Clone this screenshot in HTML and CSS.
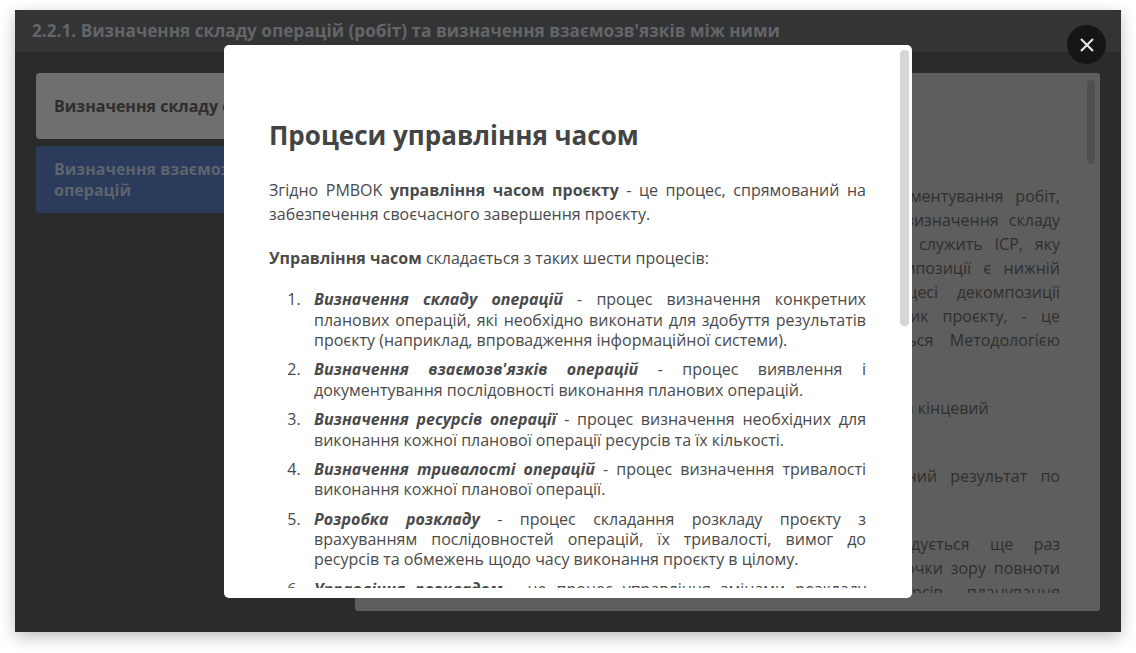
FILE: index.html
```html
<!DOCTYPE html>
<html lang="uk">
<head>
    <meta charset="UTF-8">
    <meta name="viewport" content="width=device-width, initial-scale=1.0">
    <title>Процеси управління часом</title>
    <link rel="stylesheet" href="styles.css">
</head>
<body>
    <div class="window">
        <div class="window-title">2.2.1. Визначення складу операцій (робіт) та визначення взаємозв'язків між ними</div>
        <div class="window-body">
            <div class="side">
                <div class="side-card side-card-grey">Визначення складу операцій</div>
                <div class="side-card side-card-blue">Визначення взаємозв'язків операцій</div>
            </div>
            <div class="panel">
                <div class="panel-text">
                    <span class="line">Першим кроком планування проєкту є визначення та документування робіт,</span>
                    <span class="line">які потрібно виконати для досягнення цілей. Основою для визначення складу</span>
                    <span class="line">операцій проєкту, тобто вхідною інформацією для процесу, служить ІСР, яку</span>
                    <span class="line">розроблено на попередньому етапі. Останнім рівнем декомпозиції є нижній</span>
                    <span class="line">рівень ІСР - пакети робіт, що беруть участь у процесі декомпозиції</span>
                    <span class="line">на операції. Виконує цю роботу команда, зокрема керівник проєкту, - це</span>
                    <span class="line">повністю обов'язкова вимога, яка в цілому рекомендується Методологією</span>
                    <p class="panel-gap">Кожна операція повинна мати визначений початок, тривалість та кінцевий</p>
                    <p class="panel-gap"><span class="line">результат, тобто для кожної операції слід вказати очікуваний результат по</span></p>
                    <p class="panel-gap">
                        <span class="line">Після завершення роботи над переліком дій рекомендується ще раз</span>
                        <span class="line">уважно переглянути отриманий перелік робіт та операцій з точки зору повноти</span>
                        <span class="line">охоплення всіх робочих пакетів та використаних ресурсів, планування</span>
                    </p>
                </div>
                <div class="panel-thumb"></div>
            </div>
        </div>

        <button class="close-btn" aria-label="Закрити">
            <svg width="16" height="16" viewBox="0 0 16 16">
                <path d="M2 2 L14 14 M14 2 L2 14" stroke="#e4e4e4" stroke-width="2.2" fill="none"/>
            </svg>
        </button>

        <div class="modal">
            <div class="modal-body">
                <h2>Процеси управління часом</h2>
                <p>Згідно PMBOK <strong>управління часом проєкту</strong> - це процес, спрямований на забезпечення своєчасного завершення проєкту.</p>
                <p><strong>Управління часом</strong> складається з таких шести процесів:</p>
                <ol>
                    <li><strong><em>Визначення складу операцій</em></strong> - процес визначення конкретних планових операцій, які необхідно виконати для здобуття результатів проєкту (наприклад, впровадження інформаційної системи).</li>
                    <li><strong><em>Визначення взаємозв'язків операцій</em></strong> - процес виявлення і документування послідовності виконання планових операцій.</li>
                    <li><strong><em>Визначення ресурсів операції</em></strong> - процес визначення необхідних для виконання кожної планової операції ресурсів та їх кількості.</li>
                    <li><strong><em>Визначення тривалості операцій</em></strong> - процес визначення тривалості виконання кожної планової операції.</li>
                    <li><strong><em>Розробка розкладу</em></strong> - процес складання розкладу проєкту з врахуванням послідовностей операцій, їх тривалості, вимог до ресурсів та обмежень щодо часу виконання проєкту в цілому.</li>
                    <li><strong><em>Управління розкладом</em></strong> - це процес управління змінами розкладу проєкту.</li>
                </ol>
            </div>
            <div class="modal-thumb"></div>
        </div>
    </div>
</body>
</html>
```

FILE: styles.css
```css
html, body {
    margin: 0;
    height: 653px;
    overflow: hidden;
    background-color: #fff;
}

body {
    font-family: "Open Sans", Arial, sans-serif;
    padding: 10px 15px 0;
    box-sizing: border-box;
}

.window {
    position: relative;
    height: 622px;
    background-color: #2a2b2b;
    box-shadow: 0 5px 15px rgba(0, 0, 0, 0.25);
    display: flex;
    flex-direction: column;
}

.window-title {
    height: 42px;
    line-height: 42px;
    padding-left: 17px;
    background-color: #333436;
    color: #646567;
    font-size: 17.2px;
    font-weight: 700;
    white-space: nowrap;
}

.window-body {
    flex: 1;
    display: flex;
    gap: 10px;
    padding: 21px;
    min-height: 0;
}

.side {
    width: 309px;
    display: flex;
    flex-direction: column;
    gap: 7px;
}

.side-card {
    height: 67px;
    box-sizing: border-box;
    display: flex;
    align-items: center;
    padding: 0 55px 0 18px;
    border-radius: 4px;
    font-size: 16px;
    line-height: 21px;
    font-weight: 700;
}

.side-card-grey {
    height: 66px;
    background-color: #6f6f6f;
    color: #2d2d2d;
    white-space: nowrap;
}

.side-card-blue {
    background-color: #2a3b5c;
    color: #5f646c;
}

.panel {
    flex: 1;
    position: relative;
    background-color: #5e5e5e;
    border-radius: 3px;
    padding: 111px 40px 0;
    overflow: hidden;
}

.panel-text {
    height: 409px;
    overflow: hidden;
    font-size: 16px;
    line-height: 24px;
    color: #302f2f;
}

.panel-text p {
    margin: 0;
}

.panel-gap {
    padding-top: 44px;
}

.line {
    display: block;
    text-align: justify;
    text-align-last: justify;
}

.panel-thumb {
    position: absolute;
    top: 7px;
    right: 5px;
    width: 8px;
    height: 84px;
    background-color: #505050;
    border-radius: 4px;
}

.close-btn {
    position: absolute;
    top: 15px;
    left: 1052px;
    width: 39px;
    height: 39px;
    padding: 0;
    border: none;
    border-radius: 50%;
    background-color: #151515;
    display: flex;
    align-items: center;
    justify-content: center;
}

.modal {
    position: absolute;
    top: 35px;
    left: 209px;
    width: 688px;
    height: 553px;
    background-color: #fff;
    border-radius: 5px;
}

.modal-body {
    height: 543px;
    overflow: hidden;
    box-sizing: border-box;
    padding: 0 46px 0 45px;
    color: #4a4a4a;
    font-size: 16px;
    line-height: 24px;
}

.modal-body h2 {
    margin: 0;
    padding-top: 72px;
    font-size: 26px;
    line-height: 36px;
    font-weight: 700;
    color: #444;
}

.modal-body p {
    margin: 20px 0 0;
    text-align: justify;
}

.modal-body h2 + p {
    margin-top: 25px;
}

.modal-body ol {
    margin: 19.4px 0 0;
    padding-left: 45px;
    font-size: 16px;
    line-height: 20.3px;
}

.modal-body li {
    margin-bottom: 9.2px;
    text-align: justify;
}

.modal-body li::marker {
    content: counter(list-item) ".\2002\2004";
}

.modal-thumb {
    position: absolute;
    top: 5px;
    right: 3px;
    width: 9px;
    height: 276px;
    background-color: #d6d6d6;
    border-radius: 4px;
}
```
